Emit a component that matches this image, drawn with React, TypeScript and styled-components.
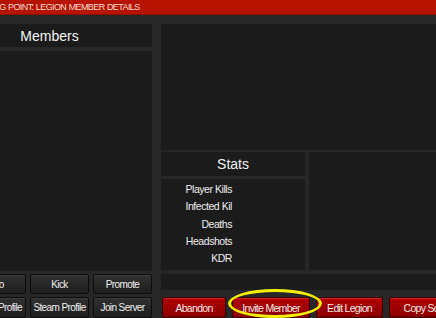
import styled, { createGlobalStyle } from "styled-components";

const GlobalStyle = createGlobalStyle`
  html, body {
    margin: 0;
    padding: 0;
    background: #272727;
    overflow: hidden;
  }

  body {
    font-family: "Liberation Sans", Arial, sans-serif;
    color: #f2f2f2;
  }
`;

const Screen = styled.div`
  width: 660px;
  height: 318px;
  margin-left: -53px;
  display: flex;
  flex-direction: column;
  background: #272727;
`;

const TitleBar = styled.div`
  height: 15px;
  flex: none;
  background: #b71400;
  border-bottom: 1px solid #8e1000;
  box-sizing: border-box;
  padding-left: 23px;
  font-size: 9px;
  letter-spacing: -0.6px;
  word-spacing: 0.5px;
  line-height: 14px;
  color: #f4dcd8;
`;

const Body = styled.div`
  flex: 1;
  display: grid;
  grid-template-columns: 205px 1fr;
  column-gap: 9px;
  padding-top: 9px;
  min-height: 0;
`;

const Column = styled.div`
  display: flex;
  flex-direction: column;
  min-height: 0;
`;

const Panel = styled.div<{ $h?: number; $gap?: number }>`
  background: #1b1b1b;
  flex: ${({ $h }) => ($h ? "none" : "1")};
  height: ${({ $h }) => ($h ? `${$h}px` : "auto")};
  margin-top: ${({ $gap }) => $gap ?? 0}px;
`;

const Header = styled(Panel)`
  display: flex;
  align-items: center;
  justify-content: center;
  font-size: 14px;
  color: #f4f4f4;
`;

const ButtonRow = styled.div<{ $gap: number; $h: number }>`
  display: flex;
  justify-content: flex-end;
  gap: 4px;
  margin-top: ${({ $gap }) => $gap}px;
  height: ${({ $h }) => $h}px;
`;

const DarkButton = styled.button`
  width: 59px;
  flex: none;
  padding: 0;
  border: 1px solid #0c0c0c;
  border-radius: 2px;
  background: linear-gradient(#313131, #1e1e1e);
  box-shadow: inset 0 1px 0 #3c3c3c;
  color: #f0f0f0;
  font-family: "Liberation Sans", Arial, sans-serif;
  font-size: 10px;
  letter-spacing: -0.6px;
  white-space: nowrap;
  overflow: hidden;
`;

const MidRow = styled.div`
  display: flex;
  gap: 4px;
  height: 118px;
  flex: none;
  margin-top: 2px;
`;

const StatsCol = styled.div`
  width: 144px;
  display: flex;
  flex-direction: column;
`;

const StatsBody = styled(Panel)`
  padding-top: 2px;
  display: flex;
  flex-direction: column;
`;

const StatRow = styled.div`
  height: 17.3px;
  width: 71px;
  text-align: right;
  font-size: 10.5px;
  letter-spacing: -0.45px;
  line-height: 17.3px;
  color: #ededed;
  white-space: nowrap;
`;

const RedRow = styled.div`
  display: flex;
  gap: 6px;
  margin-top: 7px;
  padding-left: 1px;
  height: 21px;
  position: relative;
`;

const RedButton = styled.button<{ $w: number }>`
  width: ${({ $w }) => $w}px;
  flex: none;
  padding: 0;
  border: 1px solid #3a0000;
  border-radius: 2px;
  background: linear-gradient(#b20000, #8a0000);
  box-shadow: inset 0 1px 0 #cc1e1e;
  color: #f6eaea;
  font-family: "Liberation Sans", Arial, sans-serif;
  font-size: 10.5px;
  letter-spacing: -0.7px;
  white-space: nowrap;
  overflow: hidden;
`;

const Highlight = styled.div`
  position: absolute;
  left: 67px;
  top: -8px;
  width: 88px;
  height: 23px;
  border: 3px solid #f4f000;
  border-radius: 50%;
  pointer-events: none;
`;

const stats = ["Player Kills", "Infected Kil", "Deaths", "Headshots", "KDR"];

export default function App() {
  return (
    <>
      <GlobalStyle />
      <Screen>
        <TitleBar>STAGING POINT: LEGION MEMBER DETAILS</TitleBar>
        <Body>
          <Column>
            <Header $h={23}>Members</Header>
            <Panel $gap={4} />
            <ButtonRow $gap={3} $h={20}>
              <DarkButton>Info</DarkButton>
              <DarkButton>Kick</DarkButton>
              <DarkButton>Promote</DarkButton>
            </ButtonRow>
            <ButtonRow $gap={3} $h={21}>
              <DarkButton>Player Profile</DarkButton>
              <DarkButton>Steam Profile</DarkButton>
              <DarkButton>Join Server</DarkButton>
            </ButtonRow>
          </Column>
          <Column>
            <Panel $h={126} />
            <MidRow>
              <StatsCol>
                <Header $h={24}>Stats</Header>
                <StatsBody $gap={3}>
                  {stats.map((s) => (
                    <StatRow key={s}>{s}</StatRow>
                  ))}
                </StatsBody>
              </StatsCol>
              <Panel />
            </MidRow>
            <Panel $h={16} $gap={4} />
            <RedRow>
              <RedButton $w={64}>Abandon</RedButton>
              <RedButton $w={78}>Invite Member</RedButton>
              <RedButton $w={67}>Edit Legion</RedButton>
              <RedButton $w={80}>Copy Squad</RedButton>
              <Highlight />
            </RedRow>
          </Column>
        </Body>
      </Screen>
    </>
  );
}
